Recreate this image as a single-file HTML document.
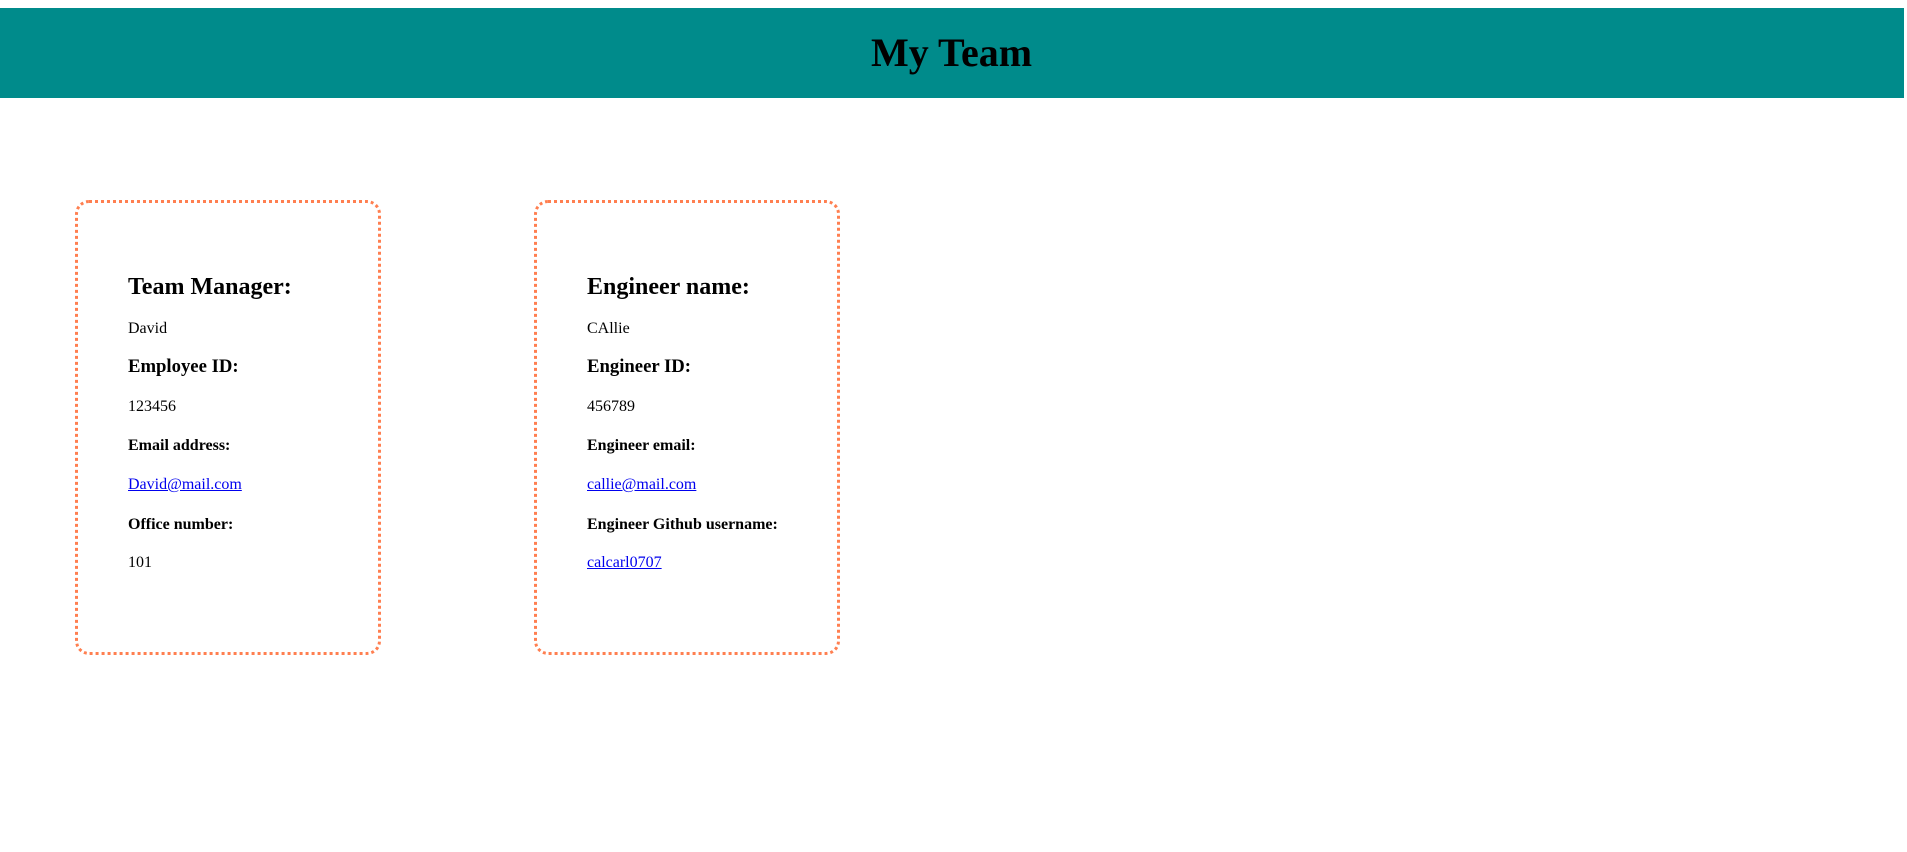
<!DOCTYPE html>
<html><head><meta charset="utf-8"><style>
html,body{margin:0;padding:0;width:1907px;height:852px;background:#fff;overflow:hidden;font-family:"Liberation Serif",serif;}
.hdr{position:absolute;left:0;top:8px;width:1904px;height:90px;background:#008b8b;}
.t{position:absolute;white-space:nowrap;line-height:1;margin:0;color:#000;}
.h1{font-size:40px;font-weight:bold;left:0;width:1903px;text-align:center;top:33px;}
.card{position:absolute;top:200px;width:300px;height:449px;border:3px dotted #ff7f50;border-radius:14px;}
.h2{font-size:24px;font-weight:bold;}
.h3{font-size:18.7px;font-weight:bold;}
.h4{font-size:16px;font-weight:bold;}
.p{font-size:16px;}
a{color:#0000ee;text-decoration:underline;}
</style></head><body>
<div class="hdr"></div>
<div class="t h1">My Team</div>
<div class="card" style="left:75px"></div>
<div class="card" style="left:534px"></div>

<div class="t h2" style="left:128px;top:275px">Team Manager:</div>
<div class="t p" style="left:128px;top:321px">David</div>
<div class="t h3" style="left:128px;top:358px">Employee ID:</div>
<div class="t p" style="left:128px;top:399px">123456</div>
<div class="t h4" style="left:128px;top:438px">Email address:</div>
<div class="t p" style="left:128px;top:477px"><a>David@mail.com</a></div>
<div class="t h4" style="left:128px;top:517px">Office number:</div>
<div class="t p" style="left:128px;top:555px">101</div>

<div class="t h2" style="left:587px;top:275px">Engineer name:</div>
<div class="t p" style="left:587px;top:321px">CAllie</div>
<div class="t h3" style="left:587px;top:358px">Engineer ID:</div>
<div class="t p" style="left:587px;top:399px">456789</div>
<div class="t h4" style="left:587px;top:438px">Engineer email:</div>
<div class="t p" style="left:587px;top:477px"><a>callie@mail.com</a></div>
<div class="t h4" style="left:587px;top:517px">Engineer Github username:</div>
<div class="t p" style="left:587px;top:555px"><a>calcarl0707</a></div>
</body></html>
